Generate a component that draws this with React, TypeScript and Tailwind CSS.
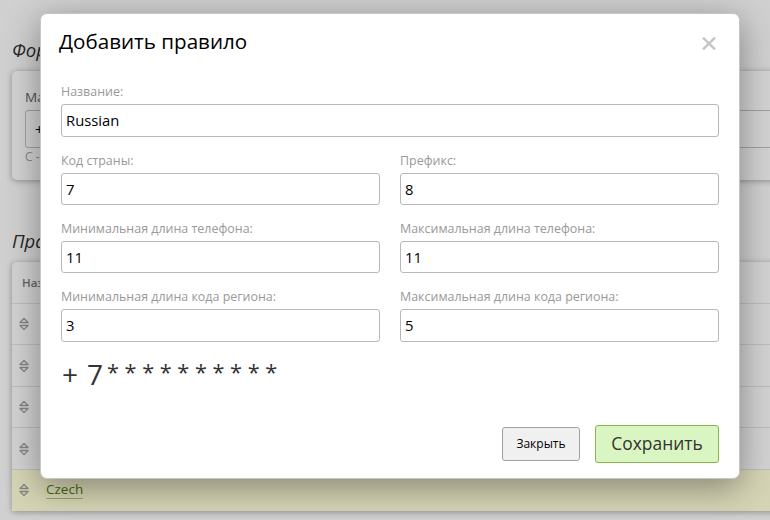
import React from "react";

function SortHandle() {
  return (
    <svg width="10" height="14" viewBox="0 0 10 14" fill="none" stroke="#858585" strokeWidth="1.3" strokeLinejoin="round" className="shrink-0">
      <path d="M5 1.4 L9 5.5 H1 Z" />
      <path d="M1 8.5 H9 L5 12.6 Z" />
    </svg>
  );
}

type FieldProps = { label: string; value: string; className?: string };

function Field({ label, value, className = "h-8" }: FieldProps) {
  return (
    <label className="flex flex-col">
      <span className="mb-[3px] h-[19px] whitespace-nowrap pt-px text-[12.45px] leading-[18px] text-[#999]">{label}</span>
      <input
        defaultValue={value}
        className={"w-full rounded-[3px] border border-[#b8b8b8] bg-white px-1 pb-px text-[14.8px] text-black outline-none " + className}
      />
    </label>
  );
}

function BackgroundPage() {
  return (
    <div className="flex flex-col pl-3">
      <h2 className="mt-9 h-[35px] text-[18.5px] italic leading-7 text-[#282828]">Фор</h2>
      <section className="flex h-[109px] w-[780px] flex-col rounded-[5px] bg-[#d2d2d2] pl-[13px] pt-[16px] shadow-[0_1px_6px_rgba(0,0,0,0.32)]">
        <span className="h-[23px] text-[13.5px] leading-[20px] text-[#505050]">Ма</span>
        <div className="h-[38px] rounded-[3px] border border-[#a0a0a0] pl-[9px] text-[15px] leading-9 text-black">+</div>
        <span className="text-[12px] leading-[18px] text-[#888]">С -</span>
      </section>
      <h2 className="mt-[47px] h-[35px] text-[18.5px] italic leading-7 text-[#282828]">Пра</h2>
      <section className="flex h-[249px] w-[780px] flex-col rounded-t-[5px] bg-[#d2d2d2] shadow-[0_1px_6px_rgba(0,0,0,0.32)]">
        <div className="flex h-[42px] shrink-0 items-center border-b border-[#bdbdbd] pl-[10px] text-[11.5px] font-semibold text-[#666]">Наз</div>
        <div className="flex h-[41px] shrink-0 items-center border-b border-[#bdbdbd] pl-[7px]"><SortHandle /></div>
        <div className="flex h-[42px] shrink-0 items-center border-b border-[#bdbdbd] pl-[7px]"><SortHandle /></div>
        <div className="flex h-[41px] shrink-0 items-center border-b border-[#bdbdbd] pl-[7px]"><SortHandle /></div>
        <div className="flex h-[42px] shrink-0 items-center border-b border-[#bdbdbd] pl-[7px]"><SortHandle /></div>
        <div className="flex h-[41px] shrink-0 items-center bg-[#d5d4b4] pb-px pl-[7px]">
          <SortHandle />
          <a className="ml-[17px] border-b border-[#91a865] text-[13.5px] leading-[17px] text-[#466811]">Czech</a>
        </div>
      </section>
    </div>
  );
}

export default function App() {
  return (
    <div className="relative h-[520px] w-[770px] overflow-hidden bg-[#d0d0d0] font-['Open_Sans','Noto_Sans',sans-serif]">
      <BackgroundPage />
      <div role="dialog" className="absolute left-10 top-[13px] flex h-[466px] w-[700px] flex-col rounded-[7px] border border-[#c6c6c6] bg-white px-5 shadow-[0_8px_34px_rgba(0,0,0,0.38)]">
        <header className="flex h-[68px] items-start justify-between">
          <h1 className="-ml-[2px] mt-[13px] whitespace-nowrap text-[20.6px] leading-7 text-black">Добавить правило</h1>
          <button aria-label="Закрыть" className="mr-[3px] mt-[23px]">
            <svg width="14" height="13" viewBox="0 0 14 13" stroke="#c8c4c6" strokeWidth="2.5">
              <path d="M1 0.7 L13 12.3 M13 0.7 L1 12.3" />
            </svg>
          </button>
        </header>
        <Field label="Название:" value="Russian" className="h-[33px]" />
        <div className="mt-[14px] grid grid-cols-[319px_319px] gap-x-5 gap-y-[14px]">
          <Field label="Код страны:" value="7" />
          <Field label="Префикс:" value="8" />
          <Field label="Минимальная длина телефона:" value="11" />
          <Field label="Максимальная длина телефона:" value="11" />
          <Field label="Минимальная длина кода региона:" value="3" className="h-[33px]" />
          <Field label="Максимальная длина кода региона:" value="5" className="h-[33px]" />
        </div>
        <div className="mt-[12px] flex h-10 items-center whitespace-nowrap text-[28px] text-[#333]">
          <span className="ml-px">+</span>
          <span className="ml-[9px]">7</span>
          <span className="ml-1 pb-1 text-[21.7px]">* * * * * * * * * *</span>
        </div>
        <footer className="mt-[31px] flex items-center justify-end gap-[15px]">
          <button className="h-[34px] w-[78px] rounded-[3px] border border-[#a0a0a0] bg-[#f0f0f0] text-[12px] text-black">Закрыть</button>
          <button className="h-[38px] w-[124px] rounded-[3px] border border-[#8ab44c] bg-[#d9f5c1] pb-0.5 text-[17.4px] text-[#333]">Сохранить</button>
        </footer>
      </div>
    </div>
  );
}
